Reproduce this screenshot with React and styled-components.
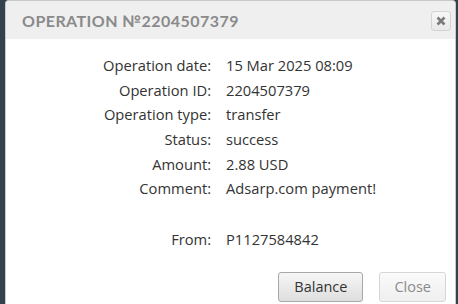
import React from "react";
import styled, { createGlobalStyle } from "styled-components";

const GlobalStyle = createGlobalStyle`
  html, body {
    margin: 0;
    padding: 0;
    background: #33434d;
    overflow: hidden;
  }
`;

const rows = [
  ["Operation date:", "15 Mar 2025 08:09"],
  ["Operation ID:", "2204507379"],
  ["Operation type:", "transfer"],
  ["Status:", "success"],
  ["Amount:", "2.88 USD"],
  ["Comment:", "Adsarp.com payment!"],
];

const App = () => {
  return (
    <Page>
      <GlobalStyle />
      <Dialog>
        <Header>
          <Title>Operation №2204507379</Title>
          <CloseX aria-label="close">
            <svg width="10" height="10" viewBox="0 0 10 10">
              <path
                d="M1.5 1.5 L8.5 8.5 M8.5 1.5 L1.5 8.5"
                stroke="#7a7a7a"
                strokeWidth="2.6"
              />
            </svg>
          </CloseX>
        </Header>
        <Body>
          {rows.map(([label, value]) => (
            <Row key={label}>
              <Label>{label}</Label>
              <Value>{value}</Value>
            </Row>
          ))}
          <Row spacer />
          <Row>
            <Label>From:</Label>
            <Value>P1127584842</Value>
          </Row>
        </Body>
        <Footer>
          <Button wide>Balance</Button>
          <Button faded>Close</Button>
        </Footer>
      </Dialog>
    </Page>
  );
};

export default App;

// styles
const Page = styled.div`
  width: 458px;
  height: 304px;
  padding-left: 5px;
  box-sizing: border-box;
  overflow: hidden;
`;
const Dialog = styled.div`
  width: 451px;
  height: 304px;
  background: #fff;
  border: 1px solid #c9c9c9;
  border-bottom: none;
  border-radius: 4px 4px 0 0;
  box-sizing: border-box;
  display: flex;
  flex-direction: column;
`;
const Header = styled.div`
  height: 38px;
  flex-shrink: 0;
  background: #efefef;
  display: flex;
  align-items: center;
  justify-content: space-between;
  padding: 0 4px 0 16px;
  border-radius: 4px 4px 0 0;
`;
const Title = styled.div`
  font-family: "Lato", "DejaVu Sans", sans-serif;
  font-size: 16px;
  font-weight: 700;
  letter-spacing: 0.45px;
  text-transform: uppercase;
  color: #8a8a8a;
  padding-top: 1px;
`;
const CloseX = styled.button`
  width: 20px;
  height: 20px;
  padding: 0;
  margin-top: 1px;
  border: 1px solid #d4d4d4;
  border-radius: 3px;
  background: linear-gradient(#f7f7f7, #e9e9e9);
  display: flex;
  align-items: center;
  justify-content: center;
`;
const Body = styled.div`
  padding-top: 14px;
  display: flex;
  flex-direction: column;
`;
const Row = styled.div`
  display: grid;
  grid-template-columns: 205px 1fr;
  column-gap: 15px;
  height: ${(p) => (p.spacer ? "26.5px" : "24.6px")};
  align-items: center;
  font-family: "Open Sans", "Liberation Sans", sans-serif;
  font-size: 14.7px;
  color: #333;
`;
const Label = styled.div`
  text-align: right;
`;
const Value = styled.div``;
const Footer = styled.div`
  display: flex;
  justify-content: flex-end;
  gap: 16px;
  padding: 20px 9px 0 0;
`;
const Button = styled.button`
  height: 30px;
  padding: 0 ${(p) => (p.wide ? "15px" : "14px")};
  font-family: "Open Sans", "Liberation Sans", sans-serif;
  font-size: 14.5px;
  color: ${(p) => (p.faded ? "#8a8a8a" : "#333")};
  border: 1px solid ${(p) => (p.faded ? "#d6d6d6" : "#a8a8a8")};
  border-radius: 3px;
  background: ${(p) =>
    p.faded
      ? "linear-gradient(#fafafa, #efefef)"
      : "linear-gradient(#f6f6f6, #dedede)"};
`;
